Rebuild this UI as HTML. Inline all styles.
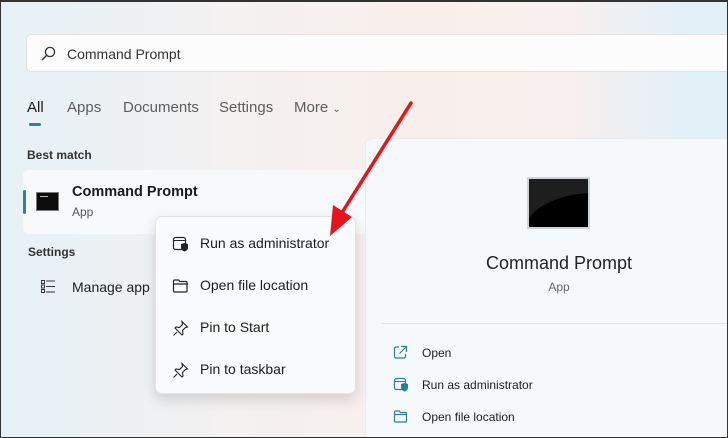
<!DOCTYPE html>
<html><head><style>
*{margin:0;padding:0;box-sizing:border-box}
body{width:728px;height:438px;overflow:hidden;font-family:"Liberation Sans",sans-serif;color:#1a1a1a;position:relative;
background:linear-gradient(90deg,#e6f1f7 0%,#f3f1f1 30%,#f8efec 55%,#f7f0ee 78%,#e2f0f8 95%);}
.frame{position:absolute;inset:0;border:1px solid #333;border-top-width:2px;pointer-events:none;z-index:10}
.abs{position:absolute}
.search{left:26px;top:34px;width:702px;height:38px;background:#fdfcfc;border:1px solid #e3e0df;border-right:none;border-radius:5px 0 0 5px}
.tab{top:99px;font-size:15px;color:#5d5d5d}
.rp{left:365px;top:138px;width:363px;height:300px;background:#f6f9fb;border-radius:7px 0 0 0;border:1px solid #e8ecef;border-right:none;border-bottom:none}
.menu{left:155px;top:216px;width:201px;height:178px;background:#f9fbfc;border:1px solid #e0e4e6;border-radius:7px;box-shadow:0 6px 14px rgba(0,0,0,.14);z-index:5}
.mi{position:absolute;left:44px;font-size:14px;color:#1c1c1c}
.mic{position:absolute;left:16px}
.ra{position:absolute;left:56px;font-size:12px;color:#1c1c1c}
.rai{position:absolute;left:27px}
</style></head><body>
<div class="abs search">
<svg class="abs" style="left:13px;top:11px" width="16" height="16" viewBox="0 0 16 16"><circle cx="10" cy="6" r="4.6" fill="none" stroke="#333" stroke-width="1.3"/><line x1="6.6" y1="9.4" x2="2" y2="14" stroke="#333" stroke-width="1.4"/></svg>
<div class="abs" style="left:40px;top:11px;font-size:14px;color:#333">Command Prompt</div>
</div>
<div class="abs tab" style="left:27px;color:#1a1a1a">All</div>
<div class="abs" style="left:29px;top:123px;width:12px;height:3px;border-radius:2px;background:#2e8196"></div>
<div class="abs tab" style="left:67px">Apps</div>
<div class="abs tab" style="left:123px">Documents</div>
<div class="abs tab" style="left:219px">Settings</div>
<div class="abs tab" style="left:294px">More <span style="font-size:10px">&#8964;</span></div>
<div class="abs" style="left:27px;top:148px;font-size:12px;font-weight:bold;color:#333">Best match</div>
<div class="abs" style="left:23px;top:170px;width:342px;height:64px;background:#f8f9fa;border-radius:5px"></div>
<div class="abs" style="left:23px;top:190px;width:3px;height:24px;background:#2e8196;border-radius:2px"></div>
<div class="abs" style="left:36px;top:192px;width:23px;height:19px;background:#0c0c0c;border:1px solid #777"><div style="margin:3px 3px;width:8px;height:1px;background:#bbb"></div></div>
<div class="abs" style="left:72px;top:184px;font-size:14.5px;font-weight:bold;color:#1a1a1a">Command Prompt</div>
<div class="abs" style="left:72px;top:205px;font-size:12px;color:#555">App</div>
<div class="abs" style="left:28px;top:245px;font-size:12px;font-weight:bold;color:#333">Settings</div>
<svg class="abs" style="left:40px;top:279px" width="16" height="15" viewBox="0 0 16 15"><g fill="none" stroke="#333" stroke-width="1"><rect x="1.5" y="1.5" width="3" height="3"/><rect x="1.5" y="6" width="3" height="3"/><rect x="1.5" y="10.5" width="3" height="3"/><line x1="6" y1="2" x2="15" y2="2"/><line x1="6" y1="7.5" x2="15" y2="7.5"/><line x1="6" y1="13" x2="15" y2="13"/></g></svg>
<div class="abs" style="left:72px;top:279px;font-size:14px;color:#222">Manage app</div>

<div class="abs rp">
<div class="abs" style="left:161px;top:38px;width:63px;height:52px;background:#1e1e1e;border:2px solid #cfd3d6;overflow:hidden"><div style="position:absolute;left:-5px;top:14px;width:140px;height:80px;border-radius:50%;background:#000"></div></div>
<div class="abs" style="left:0;width:386px;top:114px;text-align:center;font-size:18px;color:#222">Command Prompt</div>
<div class="abs" style="left:0;width:386px;top:141px;text-align:center;font-size:12px;color:#666">App</div>
<div class="abs" style="left:16px;top:184px;width:347px;height:1px;background:#e1e4e6"></div>
<svg class="rai" style="top:206px" width="15" height="15" viewBox="0 0 15 15"><g fill="none" stroke="#2b7f94" stroke-width="1.2"><path d="M6 2H3a1.5 1.5 0 0 0-1.5 1.5v8A1.5 1.5 0 0 0 3 13h8a1.5 1.5 0 0 0 1.5-1.5V9"/><path d="M8 1.5h5.5V7M13.5 1.5L6.5 8.5"/></g></svg>
<div class="ra" style="top:207px">Open</div>
<svg class="rai" style="top:238px" width="15" height="15" viewBox="0 0 15 15"><rect x="1.5" y="1.5" width="11" height="11" rx="2" fill="none" stroke="#2b7f94" stroke-width="1.2"/><line x1="1.5" y1="4.5" x2="12.5" y2="4.5" stroke="#2b7f94"/><path d="M8 7l3.5-1 3.5 1v3.5c0 2-1.7 3.5-3.5 4-1.8-.5-3.5-2-3.5-4z" fill="#2b7f94"/></svg>
<div class="ra" style="top:239px">Run as administrator</div>
<svg class="rai" style="top:270px" width="15" height="14" viewBox="0 0 15 14"><path d="M1.5 3a1 1 0 0 1 1-1h3.5l1.5 1.5h5a1 1 0 0 1 1 1V12a1 1 0 0 1-1 1h-10a1 1 0 0 1-1-1z M1.5 5.5h12.5" fill="none" stroke="#2b7f94" stroke-width="1.2"/></svg>
<div class="ra" style="top:271px">Open file location</div>
</div>

<div class="abs menu">
<svg class="mic" style="top:19px" width="17" height="16" viewBox="0 0 17 16"><rect x="1.5" y="1.5" width="12" height="12" rx="2" fill="none" stroke="#222" stroke-width="1.2"/><line x1="1.5" y1="4.5" x2="13.5" y2="4.5" stroke="#222"/><path d="M9 8l3.5-1 3.5 1v3.5c0 2-1.7 3.5-3.5 4-1.8-.5-3.5-2-3.5-4z" fill="#222"/></svg>
<div class="mi" style="top:18px">Run as administrator</div>
<svg class="mic" style="top:61px" width="17" height="15" viewBox="0 0 17 15"><path d="M1.5 3a1 1 0 0 1 1-1h4l1.5 1.5h6a1 1 0 0 1 1 1V13a1 1 0 0 1-1 1h-11.5a1 1 0 0 1-1-1z M1.5 6h14.5" fill="none" stroke="#222" stroke-width="1.2"/></svg>
<div class="mi" style="top:60px">Open file location</div>
<svg class="mic" style="top:103px" width="17" height="17" viewBox="0 0 17 17"><path d="M10 1.5l5.5 5.5-2 .5-3 3 .5 3.5-1 1-7-7 1-1 3.5.5 3-3z M5 12l-3.5 3.5" fill="none" stroke="#222" stroke-width="1.1"/></svg>
<div class="mi" style="top:102px">Pin to Start</div>
<svg class="mic" style="top:145px" width="17" height="17" viewBox="0 0 17 17"><path d="M10 1.5l5.5 5.5-2 .5-3 3 .5 3.5-1 1-7-7 1-1 3.5.5 3-3z M5 12l-3.5 3.5" fill="none" stroke="#222" stroke-width="1.1"/></svg>
<div class="mi" style="top:144px">Pin to taskbar</div>
</div>

<svg class="abs" style="left:0;top:0;z-index:6" width="728" height="438"><line x1="411" y1="103" x2="343" y2="211" stroke="#e8141c" stroke-width="3.5" stroke-linecap="round"/><polygon points="330,236 333,205 352,217" fill="#e8141c"/></svg>
<div class="frame"></div>
</body></html>
